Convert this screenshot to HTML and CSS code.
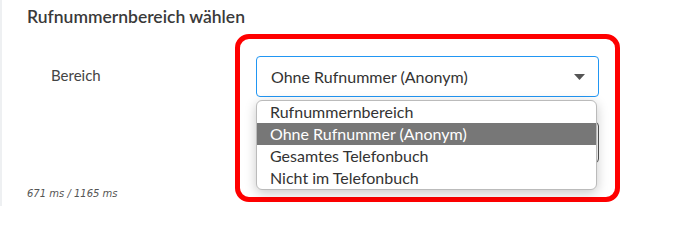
FILE: index.html
```html
<!DOCTYPE html>
<html lang="de">
<head>
<meta charset="utf-8">
<title>Rufnummernbereich wählen</title>
<link rel="stylesheet" href="styles.css">
</head>
<body>
<div class="card">
  <h2 class="title">Rufnummernbereich wählen</h2>
  <div class="label">Bereich</div>
  <div class="timing">671 ms / 1165 ms</div>
  <div class="highlight">
    <div class="field">
      <div class="select active">
        <span class="value">Ohne Rufnummer (Anonym)</span>
        <svg class="caret" width="11" height="6" viewBox="0 0 11 6"><path d="M0 0H11L5.5 6Z" fill="#555"/></svg>
      </div>
      <ul class="options">
        <li>Rufnummernbereich</li>
        <li class="selected">Ohne Rufnummer (Anonym)</li>
        <li>Gesamtes Telefonbuch</li>
        <li>Nicht im Telefonbuch</li>
      </ul>
    </div>
    <div class="select second"></div>
  </div>
</div>
</body>
</html>
```
FILE: styles.css
```css
html, body {
  margin: 0;
  padding: 0;
  background: #ffffff;
}
body {
  width: 692px;
  height: 206px;
  overflow: hidden;
  font-family: Lato, "Open Sans", sans-serif;
  color: #333;
}
.card {
  box-sizing: border-box;
  height: 206px;
  border-left: 2px solid #eef0f2;
  display: grid;
  grid-template-columns: 25px 208px 385px 1fr;
  grid-template-rows: auto 1fr;
}
.title {
  grid-column: 2 / 4;
  grid-row: 1;
  margin: 0;
  padding-top: 5px;
  font-size: 17.5px;
  line-height: 24px;
  font-weight: 600;
  color: #3a3a3a;
}
.label {
  grid-column: 2;
  grid-row: 2;
  align-self: start;
  margin-top: 36px;
  padding-left: 24px;
  font-size: 15px;
  line-height: 20px;
  color: #444;
}
.timing {
  grid-column: 2;
  grid-row: 2;
  align-self: end;
  margin-bottom: 5px;
  font-family: "DejaVu Sans", sans-serif;
  font-size: 10px;
  line-height: 14px;
  font-style: italic;
  color: #555;
}
.highlight {
  grid-column: 3;
  grid-row: 2;
  align-self: start;
  margin-top: 5px;
  box-sizing: border-box;
  width: 385px;
  border: 5px solid #ff0000;
  border-radius: 14px;
  padding: 17px 16px 34px 16px;
  display: flex;
  flex-direction: column;
  gap: 25px;
}
.field {
  position: relative;
}
.select {
  box-sizing: border-box;
  height: 41px;
  border-radius: 4px;
  display: flex;
  align-items: center;
  justify-content: space-between;
  padding: 0 13px 0 14px;
}
.select.active {
  border: 1px solid #2196f3;
}
.select.second {
  border: 1px solid #555;
}
.value {
  font-size: 16px;
  color: #333;
}
.options {
  position: absolute;
  top: 44px;
  left: 0;
  width: 341px;
  box-sizing: border-box;
  margin: 0;
  padding: 0;
  list-style: none;
  background: #fff;
  border: 1px solid #bbb;
  border-radius: 6px;
  box-shadow: 0 3px 12px rgba(0, 0, 0, 0.22);
  overflow: hidden;
}
.options li {
  height: 22px;
  line-height: 22px;
  padding-left: 13px;
  font-size: 16px;
  color: #333;
}
.options li.selected {
  background: #777;
  color: #fff;
}
```
